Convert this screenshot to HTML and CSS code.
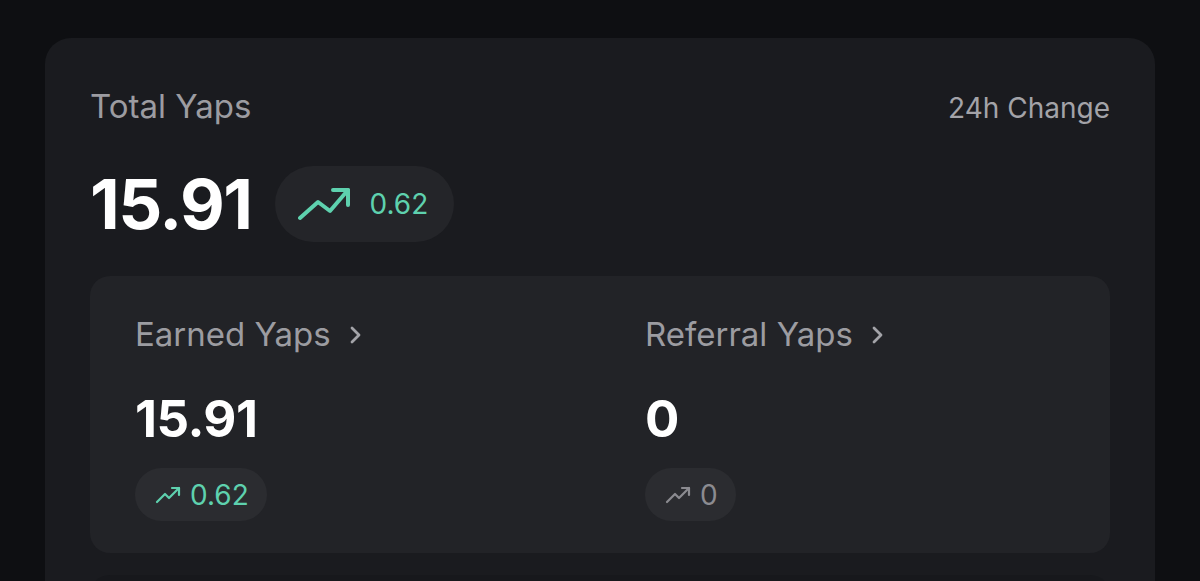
FILE: index.html
```html
<!DOCTYPE html>
<html lang="en">
<head>
<meta charset="utf-8">
<title>Total Yaps</title>
<link rel="stylesheet" href="styles.css">
</head>
<body>
<main class="page">
  <section class="card">
    <header class="card-head">
      <span class="label">Total Yaps</span>
      <span class="label label-sm">24h Change</span>
    </header>
    <div class="total-row">
      <span class="total">15.91</span>
      <span class="pill pill-lg up">
        <svg class="ico-lg" viewBox="0 0 52 34" width="52" height="34" fill="none" stroke="currentColor" stroke-width="4" stroke-linecap="round" stroke-linejoin="round"><polyline points="2,31 20,15 32,24 50,3"/><polyline points="35,3 50,3 50,18"/></svg>
        <span>0.62</span>
      </span>
    </div>
    <div class="panel">
      <div class="col">
        <div class="col-head">Earned Yaps
          <svg class="chev" viewBox="0 0 14 20" width="14" height="20" fill="none" stroke="currentColor" stroke-width="2.8" stroke-linecap="round" stroke-linejoin="round"><polyline points="3,3 10,10 3,17"/></svg>
        </div>
        <div class="value">15.91</div>
        <span class="pill pill-sm up">
          <svg class="ico-sm" viewBox="0 0 26 18" width="26" height="18" fill="none" stroke="currentColor" stroke-width="2.2" stroke-linecap="round" stroke-linejoin="round"><polyline points="2,16 10,8 14,12 24,2"/><polyline points="17,2 24,2 24,9"/></svg>
          <span>0.62</span>
        </span>
      </div>
      <div class="col">
        <div class="col-head">Referral Yaps
          <svg class="chev" viewBox="0 0 14 20" width="14" height="20" fill="none" stroke="currentColor" stroke-width="2.8" stroke-linecap="round" stroke-linejoin="round"><polyline points="3,3 10,10 3,17"/></svg>
        </div>
        <div class="value">0</div>
        <span class="pill pill-sm flat">
          <svg class="ico-sm" viewBox="0 0 26 18" width="26" height="18" fill="none" stroke="currentColor" stroke-width="2.2" stroke-linecap="round" stroke-linejoin="round"><polyline points="2,16 10,8 14,12 24,2"/><polyline points="17,2 24,2 24,9"/></svg>
          <span>0</span>
        </span>
      </div>
    </div>
    <div class="panel-next"></div>
  </section>
</main>
</body>
</html>
```

FILE: styles.css
```css
* { box-sizing: border-box; }
html, body {
  margin: 0;
  background: #0e0f12;
  font-family: Inter, "Noto Sans", "Liberation Sans", sans-serif;
  color: #fff;
  overflow: hidden;
}
.page {
  padding: 38px 45px 0;
  height: 581px;
}
.card {
  background: #1a1b1f;
  border-radius: 26px;
  padding: 48px 45px 0;
  min-height: 600px;
}
.card-head {
  display: flex;
  justify-content: space-between;
  align-items: baseline;
}
.label {
  font-size: 33px;
  line-height: 40px;
  color: #9c9ca1;
}
.label-sm {
  font-size: 28px;
  color: #a3a3a8;
}
.total-row {
  display: flex;
  align-items: center;
  gap: 23px;
  margin-top: 36px;
}
.total {
  font-size: 69px;
  line-height: 80px;
  font-weight: 700;
  letter-spacing: -1.5px;
}
.pill {
  display: inline-flex;
  align-items: center;
  border-radius: 999px;
}
.pill-lg {
  height: 76px;
  padding: 0 26px 0 23px;
  gap: 20px;
  background: #242529;
  font-size: 28px;
}
.up { color: #5ed1ae; }
.flat { color: #8b8b90; }
.panel {
  margin-top: 32px;
  background: #222327;
  border-radius: 20px;
  display: grid;
  grid-template-columns: 1fr 1fr;
  height: 277px;
}
.col {
  padding: 38px 45px 0;
  display: flex;
  flex-direction: column;
  align-items: flex-start;
}
.col-head {
  display: flex;
  align-items: center;
  gap: 18px;
  font-size: 33px;
  line-height: 40px;
  color: #9c9ca1;
}
.chev { color: #a3a3a8; margin-top: 2px; }
.value {
  margin-top: 35px;
  font-size: 51px;
  line-height: 60px;
  font-weight: 700;
  letter-spacing: -0.5px;
}
.pill-sm {
  margin-top: 19px;
  height: 53px;
  padding: 0 18px 0 20px;
  gap: 9px;
  background: #2b2c30;
  font-size: 28px;
}
.panel-next {
  margin-top: 22px;
  height: 40px;
  background: #17181c;
  border-radius: 20px;
}
```
